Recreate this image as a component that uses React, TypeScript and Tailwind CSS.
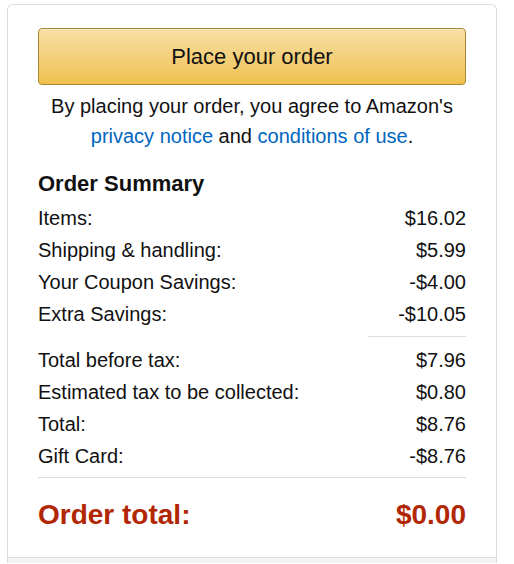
const rowsTop = [
  { label: "Items:", value: "$16.02" },
  { label: "Shipping & handling:", value: "$5.99" },
  { label: "Your Coupon Savings:", value: "-$4.00" },
  { label: "Extra Savings:", value: "-$10.05" },
];

const rowsBottom = [
  { label: "Total before tax:", value: "$7.96" },
  { label: "Estimated tax to be collected:", value: "$0.80" },
  { label: "Total:", value: "$8.76" },
  { label: "Gift Card:", value: "-$8.76" },
];

function Row({ label, value }: { label: string; value: string }) {
  return (
    <div className="flex h-[32px] items-center justify-between text-[20px] leading-[32px] text-[#111]">
      <span>{label}</span>
      <span>{value}</span>
    </div>
  );
}

export default function App() {
  return (
    <div
      className="h-screen overflow-hidden bg-white pl-[7px] pt-[4px]"
      style={{ fontFamily: '"Liberation Sans", Arial, sans-serif' }}
    >
      <div className="w-[490px] overflow-hidden rounded-t-[6px] border-x border-t border-[#ddd]">
        {/* Main box */}
        <div className="px-[30px] pb-[25px] pt-[23px]">
          <button
            type="button"
            className="flex h-[57px] w-full items-center justify-center rounded-[4px] border border-[#a88734] bg-gradient-to-b from-[#f7dfa5] to-[#f0c14b] text-[22px] text-[#111] shadow-[inset_0_1px_0_rgba(255,255,255,0.4)]"
          >
            Place your order
          </button>

          <p className="mt-[6px] text-center text-[20px] leading-[30px] text-[#111]">
            By placing your order, you agree to Amazon's
            <br />
            <a className="text-[#0066c0]">privacy notice</a> and{" "}
            <a className="text-[#0066c0]">conditions of use</a>.
          </p>

          <h3 className="mt-[19px] text-[22px] font-bold leading-[28px] text-[#111]">
            Order Summary
          </h3>

          <div className="mt-[4px]">
            {rowsTop.map((r) => (
              <Row key={r.label} {...r} />
            ))}
          </div>

          <div className="mb-[7px] mt-[6px] flex justify-end">
            <div className="h-px w-[98px] bg-[#ddd]" />
          </div>

          <div>
            {rowsBottom.map((r) => (
              <Row key={r.label} {...r} />
            ))}
          </div>

          <div className="mt-[5px] h-px bg-[#ddd]" />

          <div className="mt-[20px] flex h-[34px] items-center justify-between text-[28px] font-bold leading-[34px] text-[#b12704]">
            <span>Order total:</span>
            <span>$0.00</span>
          </div>
        </div>

        {/* Footer box */}
        <div className="h-[6px] border-t border-[#ddd] bg-[#f3f3f3]" />
      </div>
    </div>
  );
}
